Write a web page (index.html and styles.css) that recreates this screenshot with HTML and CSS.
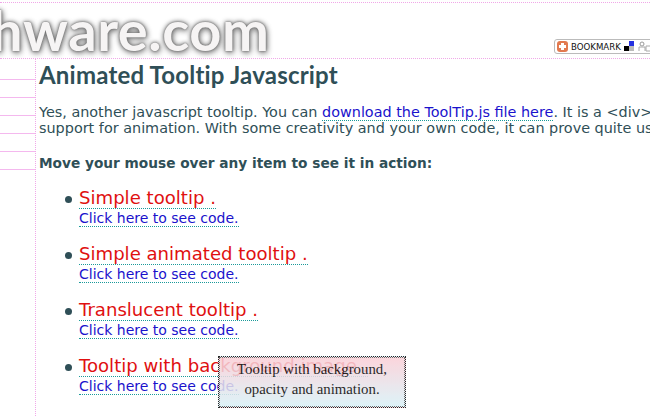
FILE: index.html
```html
<!DOCTYPE html>
<html lang="en">
<head>
  <meta charset="UTF-8"/>
  <title>Animated Tooltip Javascript</title>
  <link rel="stylesheet" href="styles.css">
</head>
<body>
  <header class="top">
    <div class="logo">hware.com</div>
    <a class="bookmark" href="#">
      <svg class="bm-plus" width="11" height="11" viewBox="0 0 11 11"><rect width="11" height="11" rx="3" fill="#e27a50"/><path d="M4 2h3v2h2v3H7v2H4V7H2V4h2z" fill="#fff"/></svg>
      <span class="bm-text">BOOKMARK</span>
      <svg class="bm-icons" width="30" height="11" viewBox="0 0 30 11"><rect x="5" y="0" width="5" height="5" fill="#2430e0"/><rect x="0" y="5" width="5" height="5" fill="#000"/><rect x="5" y="5" width="5" height="5" fill="#bbb"/><circle cx="18" cy="3" r="2" fill="none" stroke="#999"/><path d="M15 10V6h6v4M22 5h5v5h-5z" fill="none" stroke="#aaa"/></svg>
    </a>
  </header>
  <div class="page">
    <nav class="side">
      <div class="side-row"></div>
      <div class="side-row"></div>
      <div class="side-row"></div>
      <div class="side-row"></div>
      <div class="side-row"></div>
      <div class="side-row"></div>
    </nav>
    <main class="content">
      <h1>Animated Tooltip Javascript</h1>
      <p class="intro">Yes, another javascript tooltip. You can <a class="dl" href="#">download the ToolTip.js file here</a>. It is a &lt;div&gt;<br>support for animation. With some creativity and your own code, it can prove quite use</p>
      <p class="lead">Move your mouse over any item to see it in action:</p>
      <ul class="demos">
        <li><a class="demo" href="#">Simple tooltip .</a><a class="code" href="#">Click here to see code.</a></li>
        <li><a class="demo" href="#">Simple animated tooltip .</a><a class="code" href="#">Click here to see code.</a></li>
        <li><a class="demo" href="#">Translucent tooltip .</a><a class="code" href="#">Click here to see code.</a></li>
        <li><a class="demo" href="#">Tooltip with background image .</a><a class="code" href="#">Click here to see code.</a></li>
      </ul>
    </main>
  </div>
  <div class="tooltip">Tooltip with background,<br>opacity and animation.</div>
</body>
</html>
```

FILE: styles.css
```css
html, body { margin: 0; height: 416px; overflow: hidden; background: #fff; }
body { font-family: "DejaVu Sans", Verdana, sans-serif; color: #2f4f57; position: relative; }

.top {
  box-sizing: border-box;
  height: 57px;
  margin-top: 2px;
  border-top: 1px dotted #f0a8e8;
  border-bottom: 1px dotted #f0a8e8;
  display: flex;
  justify-content: space-between;
  align-items: flex-end;
  overflow: hidden;
}
.logo {
  font-family: Lato, sans-serif;
  font-weight: 700;
  font-size: 56px;
  line-height: 52px;
  margin-left: -9px;
  margin-bottom: 2px;
  letter-spacing: 0.6px;
  color: #f6f4f4;
  text-shadow: 0 0 2px #666, 0 0 5px #777, 1px 2px 6px #888;
  white-space: nowrap;
}
.bookmark {
  display: flex;
  align-items: center;
  gap: 3px;
  width: 125px;
  height: 15px;
  flex-shrink: 0;
  margin: 0 -29px 4px 0;
  padding-left: 2px;
  box-sizing: border-box;
  border: 1px solid #bbb;
  border-radius: 3px;
  text-decoration: none;
}
.bm-text { font-family: "DejaVu Sans", sans-serif; font-size: 8.6px; color: #111; }

.page { display: flex; height: 357px; }
.side {
  width: 35px;
  flex-shrink: 0;
  border-right: 1px dotted #f0a8e8;
  padding-top: 3px;
}
.side-row { height: 17px; border-bottom: 1px solid #f4b8ee; }

.content { padding-left: 3px; white-space: nowrap; }
h1 {
  font-family: Lato, sans-serif;
  font-size: 24px;
  line-height: 28px;
  letter-spacing: 0.2px;
  margin: 2px 0 0;
  color: #2f4f57;
}
.intro { font-size: 14.4px; line-height: 16px; margin: 15px 0 0; }
.lead { font-size: 13.7px; font-weight: bold; line-height: 16px; margin: 19px 0 0; }
.dl { color: #1a12cc; text-decoration: none; border-bottom: 1px dotted #1a9a9a; }

.demos { list-style: none; margin: 17px 0 0; padding-left: 40px; }
.demos li { position: relative; margin-bottom: 17px; }
.demos li::before {
  content: "";
  position: absolute;
  left: -14px;
  top: 8px;
  width: 7px;
  height: 7px;
  border-radius: 50%;
  background: #2f4f57;
}
.demo, .code {
  display: block;
  width: fit-content;
  text-decoration: none;
  border-bottom: 1px dotted #1a9a9a;
}
.demo { font-size: 18.1px; line-height: 20px; color: #e01010; }
.code { font-size: 14px; line-height: 16px; padding-top: 1px; color: #1a12cc; }

.tooltip {
  position: absolute;
  left: 218px;
  top: 356px;
  box-sizing: border-box;
  width: 188px;
  height: 52px;
  border: 1px dotted #000;
  outline: 1px dotted #555;
  outline-offset: -2px;
  background: linear-gradient(#fbced6, #d8f2f8);
  opacity: 0.85;
  font-family: "Liberation Serif", serif;
  font-size: 14.8px;
  line-height: 20px;
  color: #000;
  text-align: center;
  padding-top: 2px;
}
```
